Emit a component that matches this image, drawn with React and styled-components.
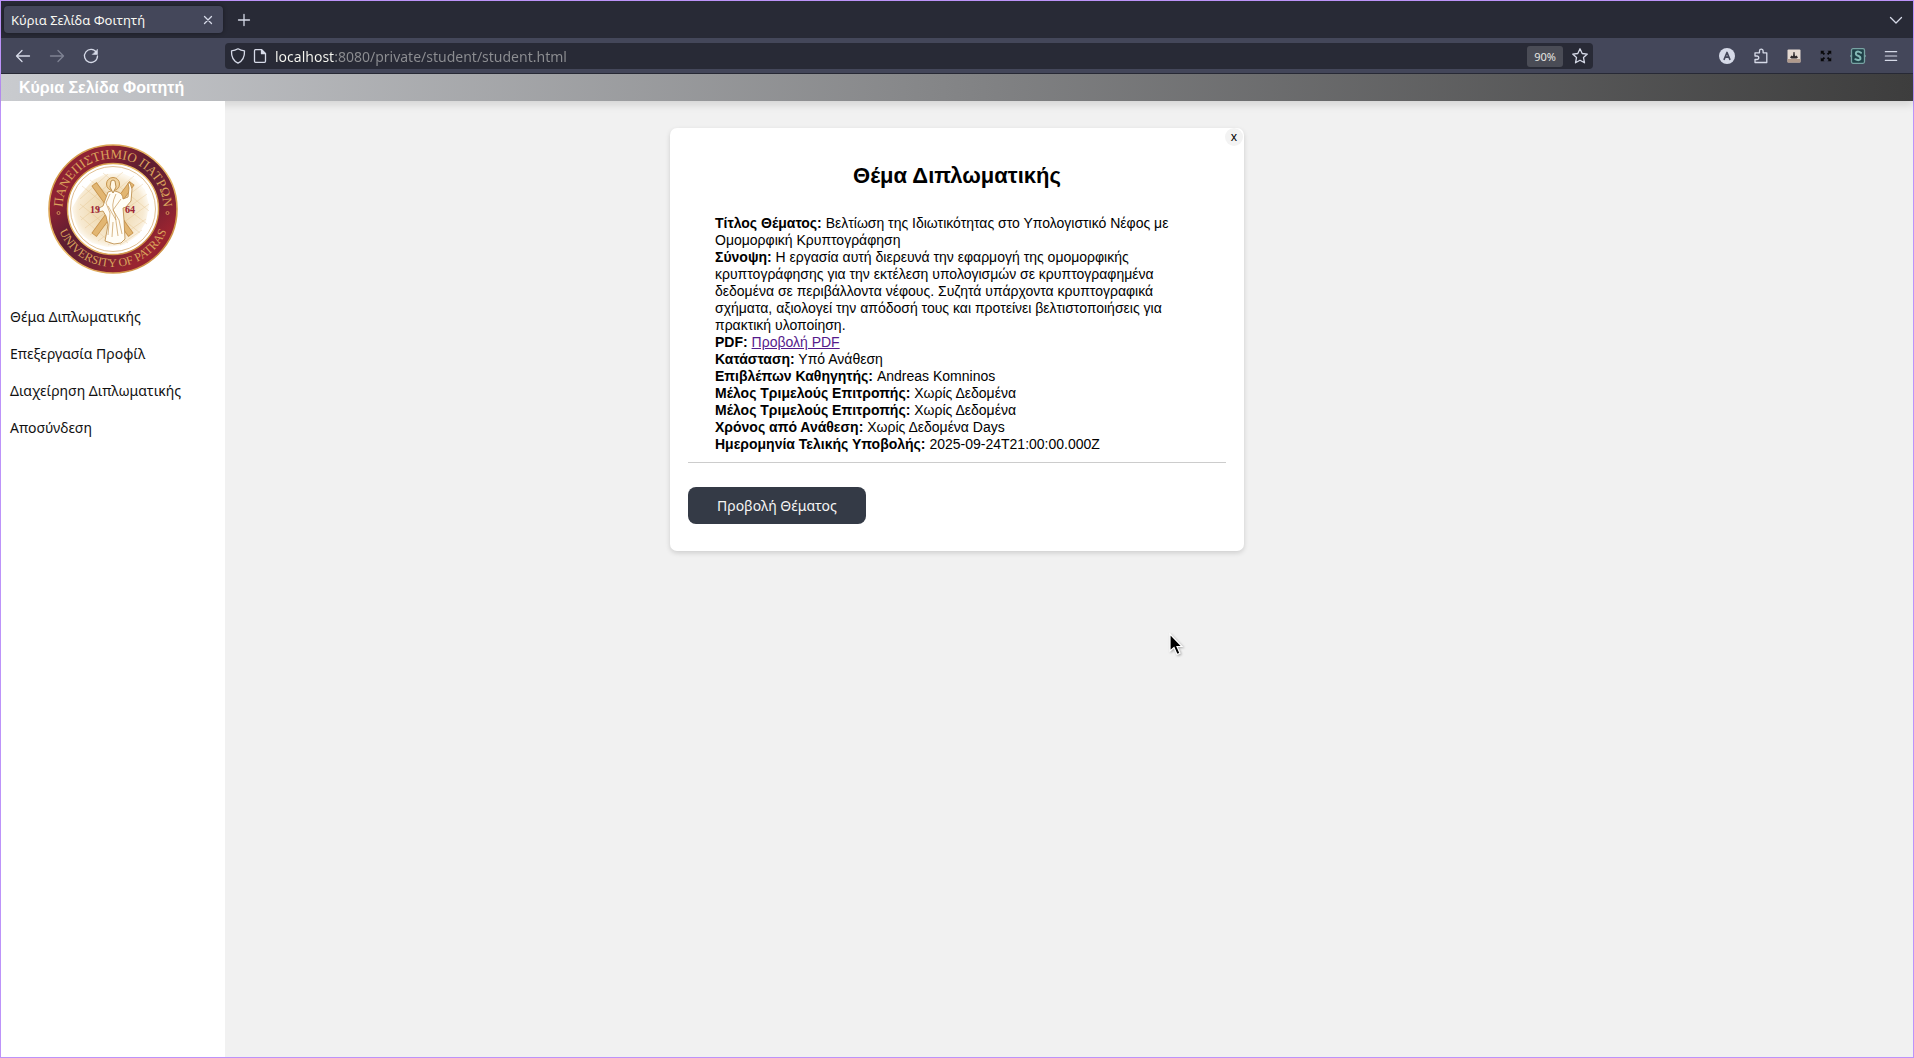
import React from "react";
import styled, { createGlobalStyle } from "styled-components";

const UI_FONT = `"Noto Sans", "Open Sans", sans-serif`;
const PAGE_FONT = `"Liberation Sans", Arial, sans-serif`;

const GlobalStyle = createGlobalStyle`
  *, *::before, *::after { box-sizing: border-box; }
  body { margin: 0; background: #f1f1f1; }
  button, input { font: inherit; border: 0; padding: 0; margin: 0; }
  svg { display: block; }
`;

const Window = styled.div`
  position: relative;
  display: flex;
  flex-direction: column;
  min-height: 100vh;
  border: 1px solid #bd93f9;
  font-family: ${UI_FONT};
`;

/* ---------- browser chrome ---------- */

const TabStrip = styled.div`
  display: flex;
  align-items: center;
  gap: 9px;
  height: 37px;
  padding: 0 9px 0 3px;
  background: #282a36;
  color: #f8f8f2;
`;

const Tab = styled.div`
  display: flex;
  align-items: center;
  justify-content: space-between;
  width: 219px;
  height: 27px;
  padding: 0 3px 0 7px;
  border-radius: 4px;
  background: #44475a;
  box-shadow: 0 0 4px rgba(0, 0, 0, 0.4);
  font-size: 13px;
  line-height: 18px;
`;

const IconButton = styled.button`
  display: flex;
  align-items: center;
  justify-content: center;
  flex: none;
  width: ${(p) => p.$size || 24}px;
  height: 24px;
  background: none;
  color: ${(p) => p.$color || "#d6dae8"};
  opacity: ${(p) => (p.disabled ? 0.4 : 1)};
`;

const Spacer = styled.div`
  flex: 1;
`;

const Toolbar = styled.div`
  display: flex;
  align-items: center;
  height: 36px;
  padding: 1px 10px 0;
  background: #44475a;
  border-bottom: 1px solid #282a36;
`;

const NavButtons = styled.div`
  display: flex;
  gap: 10px;
  width: 214px;
`;

const UrlBar = styled.div`
  display: flex;
  align-items: center;
  flex: 1;
  height: 26px;
  border-radius: 4px;
  background: #282a36;
`;

const UrlInput = styled.input`
  flex: 1;
  min-width: 0;
  height: 24px;
  margin-left: 6px;
  outline: 0;
  font-size: 14px;
  color: transparent;
  background: linear-gradient(to right, #f8f8f2 59px, #8d8e92 59px);
  background-clip: text;
  -webkit-background-clip: text;
`;

const ZoomBadge = styled.button`
  width: 36px;
  height: 21px;
  margin-right: 4px;
  border-radius: 3px;
  background: #4a4c56;
  color: #e6e6e2;
  font-size: 11px;
  line-height: 21px;
`;

const Extensions = styled.div`
  display: flex;
  align-items: center;
  gap: 9px;
  margin-left: 121px;
`;

const Icon = ({ size = 16, children, ...rest }) => (
  <svg
    width={size}
    height={size}
    viewBox="0 0 16 16"
    fill="none"
    stroke="currentColor"
    strokeWidth="1.3"
    strokeLinecap="round"
    strokeLinejoin="round"
    aria-hidden="true"
    {...rest}
  >
    {children}
  </svg>
);

/* ---------- page ---------- */

const PageHeader = styled.header`
  position: relative;
  height: 27px;
  padding: 0 18px;
  background: linear-gradient(to right, #c9cbcf, #3d3d3d);
  box-shadow: 0 4px 8px rgba(0, 0, 0, 0.12);
`;

const PageTitle = styled.h1`
  margin: 0;
  font-family: ${PAGE_FONT};
  font-size: 16px;
  line-height: 27px;
  color: #fff;
`;

const Body = styled.div`
  display: flex;
  flex: 1;
`;

const Sidebar = styled.aside`
  position: relative;
  flex: none;
  width: 224px;
  padding-top: 43px;
  background: #fff;
`;

const LogoBox = styled.div`
  display: flex;
  justify-content: center;
  margin-bottom: 24px;
`;

const NavLink = styled.a`
  display: block;
  padding: 8px 9px;
  font-size: 14px;
  line-height: 21px;
  color: #111;
  text-decoration: none;
`;

const Nav = styled.nav`
  display: flex;
  flex-direction: column;
`;

const Main = styled.main`
  flex: 1;
  padding: 27px 224px 27px 0;
  background: #f1f1f1;
`;

const Card = styled.section`
  position: relative;
  max-width: 574px;
  margin: 0 auto;
  padding: 36px 18px 27px;
  border-radius: 7px;
  background: #fff;
  box-shadow: 0 2px 5px rgba(0, 0, 0, 0.15);
  font-family: ${PAGE_FONT};
  color: #000;
`;

const CloseButton = styled.button`
  position: absolute;
  top: 0;
  right: 1px;
  width: 18px;
  height: 18px;
  border-radius: 50%;
  background: #f3f3f3;
  color: #000;
  font-family: ${UI_FONT};
  font-size: 12px;
  line-height: 16px;
`;

const CardTitle = styled.h2`
  margin: 0 0 27px;
  font-size: 22px;
  line-height: 24px;
  text-align: center;
`;

const Details = styled.div`
  padding: 0 27px 9px;
  border-bottom: 1px solid #ccc;
  font-size: 14px;
  line-height: 17px;
`;

const Row = styled.div``;

const PdfLink = styled.a`
  color: #551a8b;
`;

const PrimaryButton = styled.button`
  display: block;
  height: 37px;
  margin-top: 24px;
  padding: 0 29px;
  border-radius: 8px;
  background: #343a46;
  color: #f5f5f5;
  font-family: ${UI_FONT};
  font-size: 14px;
`;

const Cursor = styled.svg`
  position: absolute;
  left: 1167px;
  top: 631px;
  filter: drop-shadow(1px 1px 1px rgba(0, 0, 0, 0.3));
`;

function Logo() {
  return (
    <svg width="130" height="130" viewBox="0 0 130 130" role="img" aria-label="University of Patras">
      <defs>
        <linearGradient id="ring" x1="0" y1="0" x2="1" y2="1">
          <stop offset="0" stopColor="#8f2034" />
          <stop offset="0.25" stopColor="#8e2233" />
          <stop offset="0.45" stopColor="#5c1d31" />
          <stop offset="0.6" stopColor="#6d2033" />
          <stop offset="0.8" stopColor="#9a2430" />
          <stop offset="1" stopColor="#8f2034" />
        </linearGradient>
        <linearGradient id="gold" x1="0" y1="0" x2="1" y2="1">
          <stop offset="0" stopColor="#c98d3c" />
          <stop offset="0.5" stopColor="#eebf6c" />
          <stop offset="1" stopColor="#c07f36" />
        </linearGradient>
        <radialGradient id="glow">
          <stop offset="0.4" stopColor="#f0dcb6" />
          <stop offset="0.85" stopColor="#f7ead2" />
          <stop offset="1" stopColor="#fdf8ee" />
        </radialGradient>
        <path id="arcTop" d="M14.5 65a50.5 50.5 0 0 1 101 0" />
        <path id="arcBottom" d="M7 65a58 58 0 0 0 116 0" />
      </defs>
      <circle cx="65" cy="65" r="64" fill="url(#ring)" stroke="url(#gold)" strokeWidth="1.6" />
      <circle cx="65" cy="65" r="45.5" fill="#fff" stroke="url(#gold)" strokeWidth="1.4" />
      <circle cx="65" cy="65" r="42.5" fill="none" stroke="#d3a565" strokeWidth="0.7" />
      <path
        d="M31 52L45 36l12-6 17-1 13 6 10 11 4 15-3 17-8 13-14 10-17 2-15-4-12-10-5-12-3-13z"
        fill="url(#glow)"
      />
      <g stroke="#dcb577" strokeWidth="0.5" opacity="0.6">
        <path d="M32 55L60 30M31 66L75 28M33 76L86 32M37 84L95 40M42 91L99 50M50 97L101 60M60 101L98 75M72 101L94 86M34 42L92 89M42 36L99 80M55 29L101 67M32 60L80 99M32 72L64 100" />
      </g>
      <g stroke="#c7924a" strokeWidth="6.4" strokeLinecap="butt">
        <path d="M46 40L83 91M84 39L46 91" />
      </g>
      <g stroke="#e2b672" strokeWidth="5" strokeLinecap="butt">
        <path d="M46.4 40.6L82.6 90.4M83.6 39.6L46.4 90.4" />
      </g>
      <circle cx="65" cy="40" r="6.5" fill="#f0d3a0" stroke="#c08a3e" strokeWidth="0.9" />
      <path
        d="M60 48q5-3 10 0 5 2 5 7l5-2 1-9-1-5h2l2 6-1 12-5 6-3 1 1 12 1 19-4 4-7 1-9-3 3-16-2-9-3-5-5 1-1-3 6-3z"
        fill="#fffdf6"
        stroke="#b98843"
        strokeWidth="0.8"
      />
      <path d="M63 37q2-2 4 0l1 6-3 6-3-6z" fill="#fff6e2" stroke="#a9772f" strokeWidth="0.8" />
      <path d="M62 50l-4 9 4 10-2 22M68 50q-6 12-1 20l3 22M73 55l-8 11 6 10 3 14M60 62l8 14M65 78l-1 15" fill="none" stroke="#c79a58" strokeWidth="0.7" />
      <g fill="#9b2236" fontFamily='"Liberation Serif", serif' fontWeight="bold" fontSize="10">
        <text x="42" y="69">19</text>
        <text x="77" y="69">64</text>
      </g>
      <g fill="#dba45c" fontFamily='"Liberation Serif", serif'>
        <text textAnchor="middle" fontSize="13">
          <textPath href="#arcTop" startOffset="50%">ΠΑΝΕΠΙΣΤΗΜΙΟ ΠΑΤΡΩΝ</textPath>
        </text>
        <text textAnchor="middle" fontSize="12">
          <textPath href="#arcBottom" startOffset="50%">UNIVERSITY OF PATRAS</textPath>
        </text>
      </g>
      <g fill="none" stroke="#dba45c" strokeWidth="0.8">
        <circle cx="10.5" cy="69" r="1.5" />
        <circle cx="119.5" cy="69" r="1.5" />
      </g>
    </svg>
  );
}

const MENU = ["Θέμα Διπλωματικής", "Επεξεργασία Προφίλ", "Διαχείρηση Διπλωματικής", "Αποσύνδεση"];

const DETAILS = [
  ["Τίτλος Θέματος:", "Βελτίωση της Ιδιωτικότητας στο Υπολογιστικό Νέφος με Ομομορφική Κρυπτογράφηση"],
  [
    "Σύνοψη:",
    "Η εργασία αυτή διερευνά την εφαρμογή της ομομορφικής κρυπτογράφησης για την εκτέλεση υπολογισμών σε κρυπτογραφημένα δεδομένα σε περιβάλλοντα νέφους. Συζητά υπάρχοντα κρυπτογραφικά σχήματα, αξιολογεί την απόδοσή τους και προτείνει βελτιστοποιήσεις για πρακτική υλοποίηση.",
  ],
  ["PDF:", <PdfLink key="pdf" href="#pdf">Προβολή PDF</PdfLink>],
  ["Κατάσταση:", "Υπό Ανάθεση"],
  ["Επιβλέπων Καθηγητής:", "Andreas Komninos"],
  ["Μέλος Τριμελούς Επιτροπής:", "Χωρίς Δεδομένα"],
  ["Μέλος Τριμελούς Επιτροπής:", "Χωρίς Δεδομένα"],
  ["Χρόνος από Ανάθεση:", "Χωρίς Δεδομένα Days"],
  ["Ημερομηνία Τελικής Υποβολής:", "2025-09-24T21:00:00.000Z"],
];

function BrowserChrome() {
  return (
    <>
      <TabStrip>
        <Tab>
          <span>Κύρια Σελίδα Φοιτητή</span>
          <IconButton aria-label="Close tab">
            <Icon><path d="M4.5 4.5l7 7M11.5 4.5l-7 7" /></Icon>
          </IconButton>
        </Tab>
        <IconButton aria-label="New tab">
          <Icon><path d="M8 2.5v11M2.5 8h11" /></Icon>
        </IconButton>
        <Spacer />
        <IconButton aria-label="List all tabs" $size={16}>
          <Icon><path d="M2.5 5.5L8 11l5.5-5.5" /></Icon>
        </IconButton>
      </TabStrip>
      <Toolbar>
        <NavButtons>
          <IconButton aria-label="Back">
            <Icon><path d="M14.5 8H1.5M7 2.5L1.5 8 7 13.5" /></Icon>
          </IconButton>
          <IconButton aria-label="Forward" disabled>
            <Icon><path d="M1.5 8h13M9 2.5L14.5 8 9 13.5" /></Icon>
          </IconButton>
          <IconButton aria-label="Reload">
            <Icon>
              <path d="M13.5 4.5A6.5 6.5 0 1 0 14.5 8" />
              <path d="M14.5 1.5v5h-5z" fill="currentColor" strokeWidth="0.5" />
            </Icon>
          </IconButton>
        </NavButtons>
        <UrlBar>
          <IconButton aria-label="Site protections" $size={26}>
            <Icon><path d="M8 .8c2 1.2 4 1.8 6.5 2 .3 6-1.5 10-6.5 12.4C3 12.800 1.200 8.800 1.500 2.800 4 2.600 6 2 8 .8z" /></Icon>
          </IconButton>
          <IconButton aria-label="Site information" $size={18}>
            <Icon>
              <path d="M3.5 1.700h6l4 4v7.600a1 1 0 0 1-1 1h-9a1 1 0 0 1-1-1V2.700a1 1 0 0 1 1-1z" />
              <path d="M9.5 1.700l4 4h-4z" fill="currentColor" />
            </Icon>
          </IconButton>
          <UrlInput aria-label="Address" defaultValue="localhost:8080/private/student/student.html" spellCheck={false} />
          <ZoomBadge>90%</ZoomBadge>
          <IconButton aria-label="Bookmark" $size={26}>
            <Icon><path d="M8 .8l2.200 4.700 5.100.6-3.800 3.500 1 5.200L8 12.200l-4.500 2.600 1-5.200L.7 6.100l5.100-.6z" /></Icon>
          </IconButton>
        </UrlBar>
        <Extensions>
          <IconButton aria-label="Account" $size={26}>
            <Icon stroke="none">
              <circle cx="8" cy="8" r="8" fill="#d6dae8" />
              <path d="M5.200 11.300L8 4.500l2.800 6.800M6.200 9.200h3.600" stroke="#44475a" strokeWidth="1.7" />
            </Icon>
          </IconButton>
          <IconButton aria-label="Extensions">
            <Icon>
              <path d="M2 7.500V4.800h4.500V3a1.800 1.800 0 0 1 3.600 0v1.800h3.700v9.700H2v-3h2a1.700 1.700 0 0 0 0-3.500H2z" />
            </Icon>
          </IconButton>
          <IconButton aria-label="Image extension">
            <Icon stroke="none">
              <rect x="1.500" y="1.500" width="13" height="13" rx="1" fill="#e4d9d1" />
              <path d="M1.500 11h13v3.500h-13z" fill="#b09a8c" />
              <path d="M4 9.500l1.500-2 1.500.8L7.500 4h1l.5 4.300 1.500-.8 1.500 2-1.500 1h-5z" fill="#2e2a2d" />
            </Icon>
          </IconButton>
          <IconButton aria-label="Fullscreen extension" $size={22} $color="#08080a">
            <Icon size={12}>
              <path
                d="M1 1h5L4.400 2.600 6.800 5 5 6.800 2.600 4.400 1 6zM15 1v5l-1.600-1.600L11 6.800 9.200 5l2.400-2.400L10 1zM1 15v-5l1.600 1.600L5 9.200 6.800 11l-2.400 2.400L6 15zM15 15h-5l1.600-1.600L9.200 11 11 9.200l2.400 2.400L15 10z"
                fill="currentColor"
                stroke="none"
              />
            </Icon>
          </IconButton>
          <IconButton aria-label="Style extension">
            <Icon stroke="none">
              <rect x="1.500" y=".7" width="13" height="14.600" rx="1.500" fill="#1f4047" stroke="#78a3a3" />
              <path d="M11 4.800Q8 2.500 6.200 4.300 5 6.800 8 7.800t2.300 3.500Q8.500 13 5.300 11.200" stroke="#83b8b5" strokeWidth="2" />
              <path d="M.5 8h1M14.500 8h1" stroke="#78a3a3" strokeWidth="1.5" />
            </Icon>
          </IconButton>
          <IconButton aria-label="Menu">
            <Icon size={14}><path d="M1.500 3h13M1.500 8h13M1.500 13h13" /></Icon>
          </IconButton>
        </Extensions>
      </Toolbar>
    </>
  );
}

export default function App() {
  return (
    <Window>
      <GlobalStyle />
      <BrowserChrome />
      <PageHeader>
        <PageTitle>Κύρια Σελίδα Φοιτητή</PageTitle>
      </PageHeader>
      <Body>
        <Sidebar>
          <LogoBox><Logo /></LogoBox>
          <Nav>
            {MENU.map((item) => (
              <NavLink key={item} href="#menu">{item}</NavLink>
            ))}
          </Nav>
        </Sidebar>
        <Main>
          <Card>
            <CloseButton aria-label="Close">x</CloseButton>
            <CardTitle>Θέμα Διπλωματικής</CardTitle>
            <Details>
              {DETAILS.map(([label, value], i) => (
                <Row key={i}><strong>{label}</strong> {value}</Row>
              ))}
            </Details>
            <PrimaryButton>Προβολή Θέματος</PrimaryButton>
          </Card>
        </Main>
      </Body>
      <Cursor width="16" height="26" viewBox="0 0 16 26" aria-hidden="true">
        <path d="M2 2v17l4-3.500 3 7 3-1.300-3-6.700h5z" fill="#000" stroke="#fff" strokeWidth="1.200" />
      </Cursor>
    </Window>
  );
}
